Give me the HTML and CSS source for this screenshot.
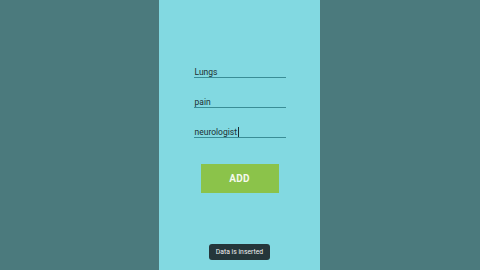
FILE: index.html
```html
<!DOCTYPE html>
<html>
<head>
<meta charset="utf-8">
<link rel="stylesheet" href="styles.css">
</head>
<body>
<div class="screen">
  <div class="phone">
    <div class="form">
      <div class="field"><span>Lungs</span></div>
      <div class="field"><span>pain</span></div>
      <div class="field"><span>neurologist</span><i class="caret"></i></div>
    </div>
    <div class="btn">ADD</div>
    <div class="spacer"></div>
    <div class="toast">Data is inserted</div>
  </div>
</div>
</body>
</html>
```

FILE: styles.css
```css
html, body { margin: 0; padding: 0; }
body { background: #4b7a7d; font-family: Roboto, "Noto Sans", sans-serif; }
.screen { width: 480px; height: 270px; display: flex; justify-content: center; }
.phone {
  width: 161px; margin-left: -1px; height: 270px; background: #82d9e1;
  display: flex; flex-direction: column; align-items: center;
  box-sizing: border-box; padding-top: 65px;
}
.form { width: 92px; margin-left: 0; display: flex; flex-direction: column; gap: 17px; }
.field {
  height: 12px; border-bottom: 1px solid #3a8d96; font-size: 8.5px; color: #203032;
  display: flex; align-items: flex-end; padding-left: 1px; line-height: 10px;
}
.caret { display: inline-block; width: 1px; height: 10px; background: #203032; margin-left: 1px; }
.btn {
  margin-top: 26px; width: 78px; height: 29px; background: #8bc34a; color: #f4f9ee;
  font-weight: bold; font-size: 10px; display: flex; align-items: center; justify-content: center;
  letter-spacing: 0.3px;
}
.spacer { flex: 1; }
.toast {
  margin-bottom: 10px; background: #25363a; color: #f0f0f0; font-size: 6.8px;
  padding: 0 7px; height: 16px; line-height: 16px; border-radius: 3px;
}
```
